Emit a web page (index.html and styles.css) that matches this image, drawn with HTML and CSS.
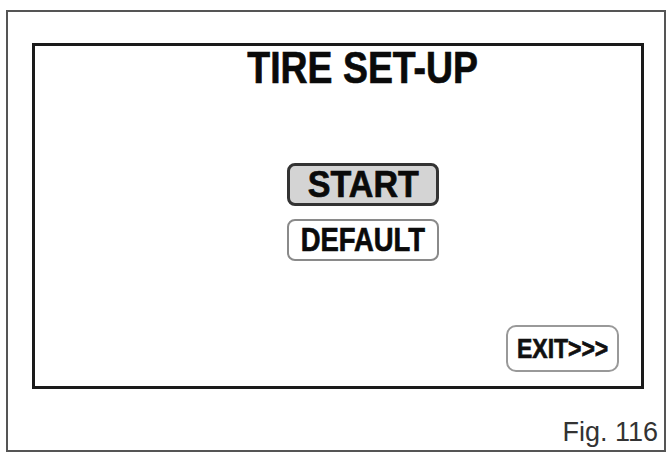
FILE: index.html
```html
<!DOCTYPE html>
<html lang="en">
<head>
    <meta charset="UTF-8">
    <meta name="viewport" content="width=device-width, initial-scale=1.0">
    <title>Tire Set-Up</title>
    <link rel="stylesheet" href="styles.css">
</head>
<body>
    <div class="sheet">
        <div class="screen">
            <h1 class="title"><span class="narrow">TIRE SET-UP</span></h1>
            <div class="menu">
                <button class="btn btn-active"><span class="narrow">START</span></button>
                <button class="btn btn-default"><span class="narrow">DEFAULT</span></button>
            </div>
            <button class="exit"><span class="narrow">EXIT&gt;&gt;&gt;</span></button>
        </div>
        <div class="caption">Fig. 116</div>
    </div>
</body>
</html>
```

FILE: styles.css
```css
* {
    margin: 0;
    padding: 0;
    box-sizing: border-box;
}

body {
    background: #fff;
    font-family: 'Liberation Sans', Arial, sans-serif;
}

.sheet {
    margin: 10px 0 0 6px;
    width: 660px;
    height: 442px;
    border: 2px solid #555;
    padding: 31px 0 0 24px;
    display: flex;
    flex-direction: column;
}

.screen {
    width: 612px;
    height: 346px;
    border: 3px solid #1a1a1a;
    padding-left: 50px;
    display: flex;
    flex-direction: column;
    align-items: center;
}

/* condensed heavy face, squeezed from the regular bold */
.narrow {
    display: inline-block;
    white-space: nowrap;
    transform: scaleX(var(--squeeze, 0.85));
    -webkit-text-stroke: 0.7px currentColor;
}

.title {
    font-size: 44px;
    line-height: 1;
    font-weight: bold;
    color: #0a0a0a;
    --squeeze: 0.85;
}

.menu {
    margin-top: 73px;
    display: flex;
    flex-direction: column;
    gap: 13px;
}

.btn {
    width: 152px;
    height: 42px;
    border: 2px solid #8a8a8a;
    border-radius: 8px;
    background: #fff;
    font-family: 'Liberation Sans', Arial, sans-serif;
    font-weight: bold;
    color: #0a0a0a;
    display: flex;
    align-items: center;
    justify-content: center;
}

.btn-active {
    height: 43px;
    border: 3px solid #333;
    background: #d4d4d4;
    font-size: 37px;
    --squeeze: 0.92;
}

.btn-default {
    font-size: 33px;
    --squeeze: 0.83;
}

.exit {
    margin-top: auto;
    margin-bottom: 14px;
    margin-right: 22px;
    align-self: flex-end;
    width: 113px;
    height: 47px;
    border: 2px solid #999;
    border-radius: 10px;
    background: #fff;
    font-family: 'Liberation Sans', Arial, sans-serif;
    font-size: 28px;
    font-weight: bold;
    color: #111;
    display: flex;
    align-items: center;
    justify-content: center;
    --squeeze: 0.82;
}

.caption {
    align-self: flex-end;
    margin-top: 30px;
    margin-right: 6px;
    font-size: 27px;
    line-height: 1;
    color: #333;
}
```
